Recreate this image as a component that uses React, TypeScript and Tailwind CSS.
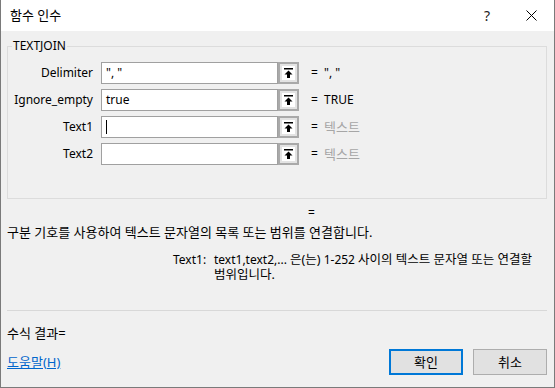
import React from "react";

const font = { fontFamily: "'Noto Sans', 'Noto Sans CJK KR', sans-serif" };

function K({ children, small }: { children: React.ReactNode; small?: boolean }) {
  return <span className={small ? "text-[12.5px]" : "text-[13px]"}>{children}</span>;
}

function UpIcon() {
  return (
    <svg width="9" height="10" viewBox="0 0 9 10">
      <rect x="0" y="0" width="9" height="1.5" fill="#000" />
      <path d="M4.5 2.5 L8.5 6.5 H6 V10 H3 V6.5 H0.5 Z" fill="#000" />
    </svg>
  );
}

function Row({ label, value, result, muted, caret }: { label: string; value: string; result: React.ReactNode; muted?: boolean; caret?: boolean }) {
  return (
    <div className="flex items-center h-[22px]">
      <div className="w-[85px] text-right leading-[16px]">{label}</div>
      <div className="w-[8px]" />
      <div className="w-[177px] h-[22px] bg-white border border-[#a0a0a0] flex items-center pl-[4px] leading-[16px] whitespace-pre">
        {value}
        {caret && <span className="inline-block w-[1px] h-[14px] bg-black" />}
      </div>
      <div className="w-[21px] h-[22px] border-2 border-[#a9a9a9] bg-[#e3e3e3] flex items-center justify-center">
        <div className="w-[13px] h-[14px] bg-white flex items-center justify-center">
          <UpIcon />
        </div>
      </div>
      <div className="ml-[12px] w-[13px] leading-[16px]">=</div>
      <div className={"leading-[16px] whitespace-pre " + (muted ? "text-[#a6a6a6]" : "text-black")}>{result}</div>
    </div>
  );
}

export default function App() {
  return (
    <div
      className="w-[555px] h-[388px] flex flex-col bg-[#f0f0f0] border-x border-b border-[#7a7a7a] text-[12px] text-black overflow-hidden"
      style={font}
    >
      <div className="h-[31px] shrink-0 bg-white flex items-center pl-[9px]">
        <span className="leading-[16px]"><K>함수 인수</K></span>
        <div className="flex-1" />
        <span className="text-[14px] w-[20px] text-center mr-[24px] leading-[16px] text-[#222]">?</span>
        <div className="w-[20px] flex items-center justify-center mr-[13px]">
          <svg width="11" height="11" viewBox="0 0 11 11">
            <path d="M0.5 0.5 L10.5 10.5 M10.5 0.5 L0.5 10.5" stroke="#000" strokeWidth="1" />
          </svg>
        </div>
      </div>

      <div className="flex-1 flex flex-col pl-[6px] pr-[7px]">
        <fieldset className="mt-[7px] border border-[#dcdcdc] px-0 pt-[8px] pb-[33px] m-0">
          <legend className="ml-[4px] px-[1px] leading-[16px]">TEXTJOIN</legend>
          <div className="flex flex-col gap-[5px]">
            <Row label="Delimiter" value={'", "'} result={'", "'} />
            <Row label="Ignore_empty" value="true" result="TRUE" />
            <Row label="Text1" value="" result={<K>텍스트</K>} muted caret />
            <Row label="Text2" value="" result={<K>텍스트</K>} muted />
          </div>
        </fieldset>

        <div className="mt-[6px] leading-[16px] pl-[301px]">=</div>
        <div className="mt-[3px] leading-[17px]"><K>구분 기호를 사용하여 텍스트 문자열의 목록 또는 범위를 연결합니다.</K></div>
        <div className="mt-[11px] flex pl-[166px]">
          <div className="w-[41px] shrink-0 leading-[15px]">Text1:</div>
          <div className="flex flex-col">
            <div className="leading-[15px] h-[15px] whitespace-nowrap">
              text1,text2,... <K small>은(는)</K> 1-252 <K small>사이의 텍스트 문자열 또는 연결할</K>
            </div>
            <div className="leading-[15px] h-[15px]">
              <K small>범위입니다.</K>
            </div>
          </div>
        </div>

        <div className="mt-[28px] h-[1px] bg-[#d8d8d8]" />
        <div className="mt-[14px] leading-[16px]"><K>수식 결과=</K></div>
        <div className="mt-[7px] flex items-center">
          <a className="text-[#0066cc] underline leading-[16px]" href="#"><K>도움말(H)</K></a>
          <div className="flex-1" />
          <button className="w-[74px] h-[26px] border-2 border-[#0078d7] bg-[#e1e1e1] leading-[16px]"><K>확인</K></button>
          <button className="ml-[10px] w-[74px] h-[26px] border border-[#adadad] bg-[#e1e1e1] leading-[16px]"><K>취소</K></button>
        </div>
      </div>
    </div>
  );
}
